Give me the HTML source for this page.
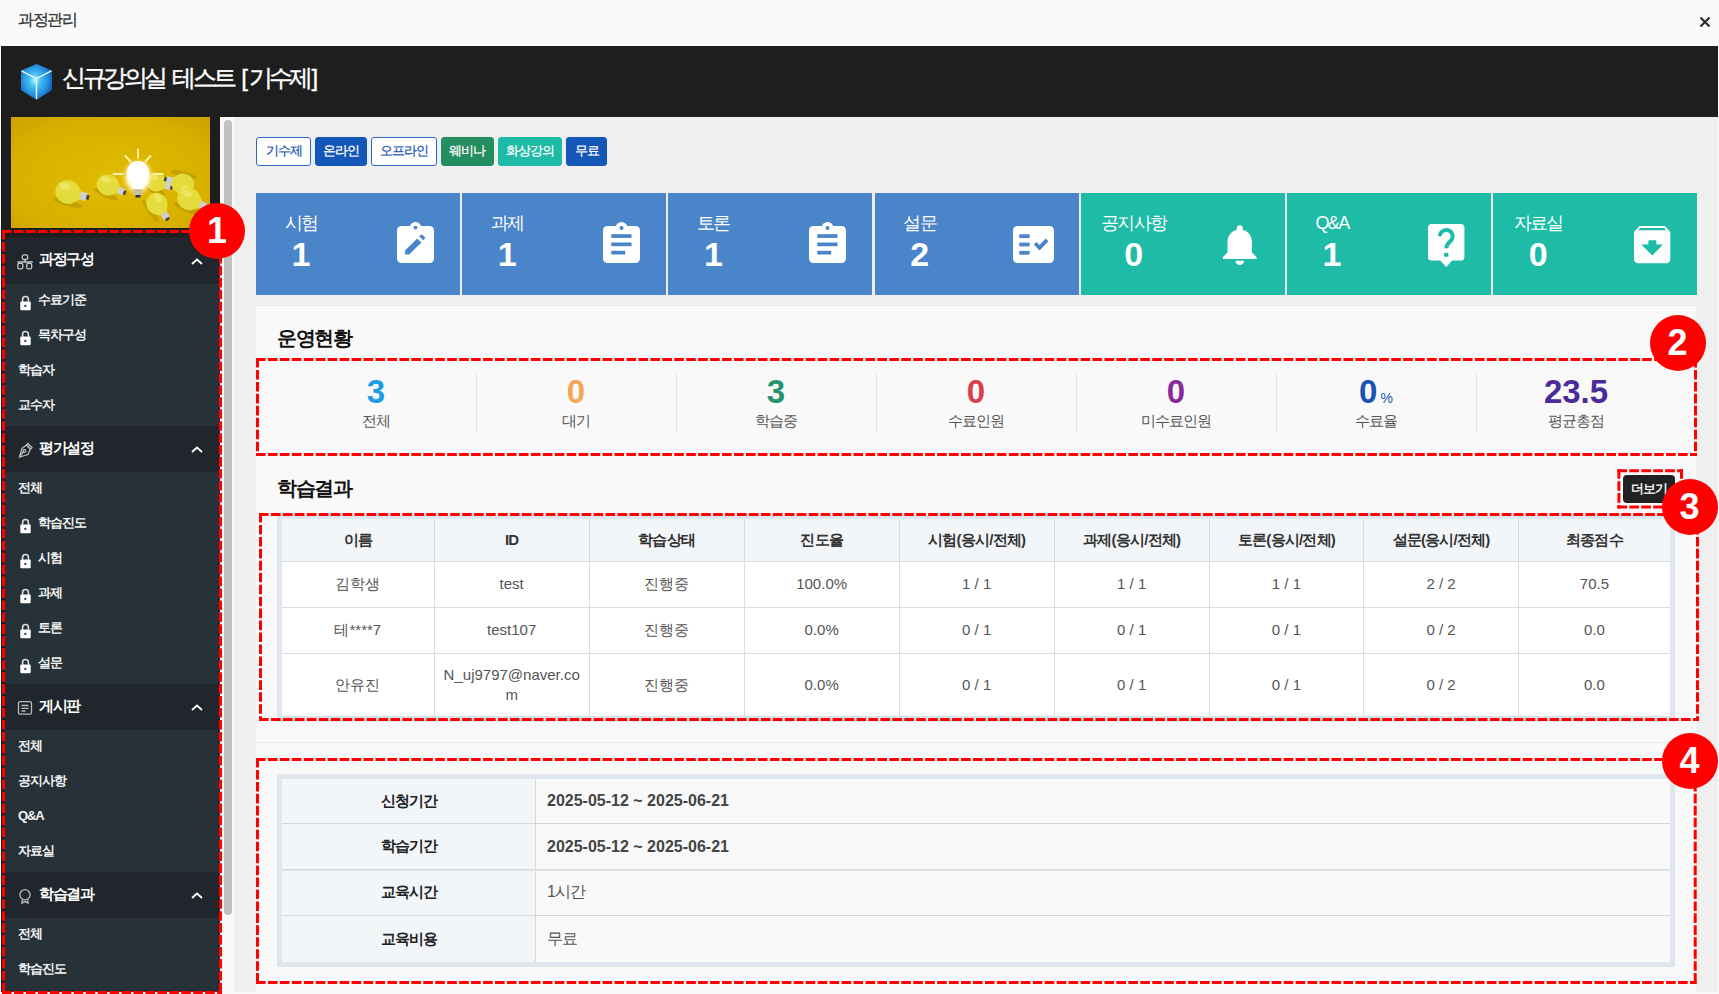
<!DOCTYPE html>
<html><head><meta charset="utf-8">
<style>
*{box-sizing:border-box;margin:0;padding:0}
html,body{width:1719px;height:994px;overflow:hidden;background:#f9f9f9;font-family:"Liberation Sans",sans-serif}
.abs{position:absolute}
#topbar{left:0;top:0;width:1719px;height:46px;background:#f9f9f9}
#ttl{left:18px;top:10px;font-size:16px;color:#333;letter-spacing:-1.5px;line-height:20px;-webkit-text-stroke:0.3px #333}
#close{left:1699px;top:13px;font-size:17px;color:#333;line-height:20px}
#hdr{left:1px;top:46px;width:1717px;height:71px;background:#1e1e1e}
#htitle{left:62px;top:63px;font-size:24px;color:#fff;line-height:30px;letter-spacing:-3.4px;word-spacing:4px;-webkit-text-stroke:0.4px #fff}
#side{left:1px;top:117px;width:219px;height:875px;background:#1e1e1e;overflow:hidden}
#content{left:234px;top:117px;width:1484px;height:875px;background:#efefef}
#sbtrack{left:220px;top:117px;width:14px;height:877px;background:#f9f9f9}
#sbthumb{left:224px;top:120px;width:8px;height:795px;background:#c1c1c1;border-radius:4px}

#img{left:11px;top:117px;width:199px;height:111px}
#menu{left:5px;top:237px;width:214px;height:755px;overflow:hidden}
.mh{position:relative;height:46px;background:#20262b;color:#fff;font-size:15px;font-weight:bold;line-height:44px;padding-left:34px;letter-spacing:-1.3px}
.mh svg.ic{position:absolute;left:12px;top:16px}
.mh svg.chev{position:absolute;left:185px;top:19px}
.ms{background:#263238;padding-bottom:2px}
.mh:first-child{height:47px;line-height:44px}
.mh:first-child svg.ic{top:17px}.mh:first-child svg.chev{top:20px}
.mi{position:relative;height:35px;line-height:32px;color:#f2f2f2;font-size:13px;font-weight:bold;padding-left:13px;letter-spacing:-1.1px}
.mi.lk{padding-left:33px}
.mi svg{position:absolute;left:15px;top:10.5px}

.tag{position:absolute;top:137px;height:29px;border-radius:3px;font-size:13px;line-height:25px;-webkit-text-stroke:0.25px currentColor;text-align:center;letter-spacing:-1px;border:1px solid transparent}
.t-o{background:#fff;border-color:#2a67c6;color:#1c57b5}
.t-b{background:#1556b9;border-color:#1556b9;color:#fff}
.t-g{background:#248e60;border-color:#248e60;color:#fff}
.t-t{background:#1dbba6;border-color:#1dbba6;color:#fff}
.card{position:absolute;top:193px;width:204px;height:102px;color:#fff}
.c-b{background:#4a84c9}
.c-t{background:#1ebba7}
.card .cw{position:absolute;left:20px;top:18.5px;min-width:50px;text-align:center}
.card .cl{font-size:18px;line-height:22px;letter-spacing:-1.6px;white-space:nowrap}
.card .cn{font-size:34px;font-weight:bold;line-height:34px;margin-top:3.5px}
.card svg{position:absolute}

#panel{left:256px;top:305px;width:1440px;height:687px;background:#f9f9f9;border-top:1.5px solid #e6e6e6}
#psep{left:256px;top:742px;width:1440px;height:1px;background:#e6e6e6}
.h3{position:absolute;left:277px;font-size:20px;font-weight:bold;color:#111;letter-spacing:-1.3px;line-height:24px}
.st{position:absolute;top:373.5px;width:200px;height:64px;text-align:center}
.st .n{font-size:33px;font-weight:bold;line-height:36px;height:36px}
.st .n small{font-size:14px;font-weight:normal;margin-left:3px}
.st .l{font-size:15px;color:#555;line-height:18px;margin-top:2.5px;letter-spacing:-1px}
.dv{position:absolute;top:374px;width:1px;height:58px;background:#e2e2e2}
#more{left:1623px;top:474.5px;width:52px;height:28px;background:#222;border-radius:4px;color:#fff;font-size:13px;line-height:28px;text-align:center;letter-spacing:-1px;-webkit-text-stroke:0.35px #fff}
.tb{position:absolute;background:#dfe6ee}
.row{position:absolute;left:282px;width:1388px;border-bottom:1px solid #dcdcdc}
.cell{position:absolute;top:0;height:100%;display:flex;align-items:center;justify-content:center;text-align:center;border-left:1px solid #dcdcdc;font-size:15px;color:#555;line-height:20px}
.hd .cell{font-weight:bold;color:#333;letter-spacing:-0.8px}

.irow{position:absolute;left:282px;width:1388px;background:#f9f9f9}
.ilab{position:absolute;left:0;top:0;width:254px;height:100%;background:#f3f6f9;border-right:1px solid #d8d8d8;display:flex;align-items:center;justify-content:center;font-size:15px;font-weight:bold;color:#222;letter-spacing:-1px}
.ival{position:absolute;left:265px;top:0;height:100%;display:flex;align-items:center;font-size:16px;color:#555}
.ival.b{font-weight:bold;color:#444}
.ival.k{letter-spacing:-1px}
#ann{position:absolute;left:0;top:0;pointer-events:none}
.bd{position:absolute;width:56px;height:56px;border-radius:50%;background:#ff0000;color:#fff;font-size:36px;font-weight:bold;text-align:center;line-height:56px}
</style></head><body>
<div id="topbar" class="abs"></div>
<div id="ttl" class="abs">과정관리</div>
<svg class="abs" style="left:1699px;top:16px" width="12" height="12" viewBox="0 0 12 12"><path d="M1.5 1.5L10.5 10.5M10.5 1.5L1.5 10.5" stroke="#333" stroke-width="2.3"/></svg>
<div id="hdr" class="abs"></div>
<svg class="abs" style="left:20px;top:63px" width="33" height="38" viewBox="0 0 33 38">
<defs><radialGradient id="cg" cx="0.45" cy="0.45" r="0.6"><stop offset="0" stop-color="#b5f4ff"/><stop offset="0.3" stop-color="#45c0f2"/><stop offset="0.75" stop-color="#1f86d8"/><stop offset="1" stop-color="#1158b0"/></radialGradient></defs>
<path d="M16.5 1L32 7.5V27L16.5 37L1 27V7.5Z" fill="url(#cg)"/>
<path d="M1.5 7.8L16.5 15.5L31.5 7.8M16.5 15.5V36" fill="none" stroke="#e8fbff" stroke-width="1.4"/>
</svg>
<div id="htitle" class="abs">신규강의실 테스트 <span style="letter-spacing:0.5px">[</span><span style="letter-spacing:-4px">기수제</span><span style="letter-spacing:0;margin-left:3px">]</span></div>
<div id="side" class="abs"></div>
<svg id="img" class="abs" width="199" height="111" viewBox="0 0 199 111">
<defs><radialGradient id="bg" cx="0.5" cy="0.55" r="0.85"><stop offset="0" stop-color="#e0bb00"/><stop offset="0.6" stop-color="#d8b000"/><stop offset="1" stop-color="#c89a00"/></radialGradient>
<radialGradient id="glow" cx="0.5" cy="0.5" r="0.5"><stop offset="0" stop-color="#fff"/><stop offset="0.6" stop-color="#fffbe0"/><stop offset="1" stop-color="#ffcc33" stop-opacity="0"/></radialGradient></defs>
<rect width="199" height="111" fill="url(#bg)"/>
<g transform="translate(57.0 75.0) rotate(15) scale(1.15)"><ellipse cx="2" cy="9" rx="13" ry="3" fill="#a88a00" opacity="0.45"/><path d="M-11 0a11 10 0 0 1 17-8.5L12-3v6L6 8.5A11 10 0 0 1-11 0Z" fill="#e4dc3c"/><ellipse cx="-4" cy="-4" rx="5" ry="3" fill="#f0ea70" opacity="0.7"/><rect x="11" y="-3.5" width="6" height="7" rx="1" fill="#d0d0c8"/><rect x="16.5" y="-2" width="2.5" height="4" fill="#444"/></g><g transform="translate(97.0 68.0) rotate(25) scale(1.03)"><ellipse cx="2" cy="9" rx="13" ry="3" fill="#a88a00" opacity="0.45"/><path d="M-11 0a11 10 0 0 1 17-8.5L12-3v6L6 8.5A11 10 0 0 1-11 0Z" fill="#e4dc3c"/><ellipse cx="-4" cy="-4" rx="5" ry="3" fill="#f0ea70" opacity="0.7"/><rect x="11" y="-3.5" width="6" height="7" rx="1" fill="#d0d0c8"/><rect x="16.5" y="-2" width="2.5" height="4" fill="#444"/></g><g transform="translate(145.0 65.0) rotate(20) scale(0.92)"><ellipse cx="2" cy="9" rx="13" ry="3" fill="#a88a00" opacity="0.45"/><path d="M-11 0a11 10 0 0 1 17-8.5L12-3v6L6 8.5A11 10 0 0 1-11 0Z" fill="#e4dc3c"/><ellipse cx="-4" cy="-4" rx="5" ry="3" fill="#f0ea70" opacity="0.7"/><rect x="11" y="-3.5" width="6" height="7" rx="1" fill="#d0d0c8"/><rect x="16.5" y="-2" width="2.5" height="4" fill="#444"/></g><g transform="translate(172.0 67.0) rotate(-165) scale(1.03)"><ellipse cx="2" cy="9" rx="13" ry="3" fill="#a88a00" opacity="0.45"/><path d="M-11 0a11 10 0 0 1 17-8.5L12-3v6L6 8.5A11 10 0 0 1-11 0Z" fill="#e4dc3c"/><ellipse cx="-4" cy="-4" rx="5" ry="3" fill="#f0ea70" opacity="0.7"/><rect x="11" y="-3.5" width="6" height="7" rx="1" fill="#d0d0c8"/><rect x="16.5" y="-2" width="2.5" height="4" fill="#444"/></g><g transform="translate(178.0 82.0) rotate(25) scale(1.09)"><ellipse cx="2" cy="9" rx="13" ry="3" fill="#a88a00" opacity="0.45"/><path d="M-11 0a11 10 0 0 1 17-8.5L12-3v6L6 8.5A11 10 0 0 1-11 0Z" fill="#e4dc3c"/><ellipse cx="-4" cy="-4" rx="5" ry="3" fill="#f0ea70" opacity="0.7"/><rect x="11" y="-3.5" width="6" height="7" rx="1" fill="#d0d0c8"/><rect x="16.5" y="-2" width="2.5" height="4" fill="#444"/></g><g transform="translate(146.0 87.0) rotate(55) scale(1.03)"><ellipse cx="2" cy="9" rx="13" ry="3" fill="#a88a00" opacity="0.45"/><path d="M-11 0a11 10 0 0 1 17-8.5L12-3v6L6 8.5A11 10 0 0 1-11 0Z" fill="#e4dc3c"/><ellipse cx="-4" cy="-4" rx="5" ry="3" fill="#f0ea70" opacity="0.7"/><rect x="11" y="-3.5" width="6" height="7" rx="1" fill="#d0d0c8"/><rect x="16.5" y="-2" width="2.5" height="4" fill="#444"/></g>
<ellipse cx="127" cy="60" rx="17" ry="20" fill="url(#glow)"/>
<path d="M127 44a11 11.5 0 0 1 7 20.5c-1 1-2 3-2 5.5v2h-10v-2c0-2.5-1-4.5-2-5.5A11 11.5 0 0 1 127 44Z" fill="#fff"/>
<rect x="122.5" y="72" width="9" height="6" rx="1" fill="#c8c0a0"/>
<rect x="124.5" y="78" width="5" height="2.5" fill="#333"/>
<g stroke="#fff3b0" stroke-width="2" stroke-linecap="round"><path d="M127 32.5v8M114.5 39l5 5.5M139.5 39l-5 5.5M102.5 57h9M142.5 57h9"/></g>
</svg>
<div id="menu" class="abs"><div class="mh"><svg class="ic" width="17" height="16" viewBox="0 0 17 16" fill="none" stroke="#c8c8c8" stroke-width="1.3"><rect x="5.3" y="0.9" width="5.4" height="4.6" rx="1.6"/><path d="M8 5.5V8M0.3 8H15.8"/><rect x="0.8" y="9.3" width="5" height="5.6" rx="1.6"/><rect x="9.7" y="9.3" width="5" height="5.6" rx="1.6"/></svg>과정구성<svg class="chev" width="14" height="9" viewBox="0 0 14 9"><path d="M2 7L7 2.5L12 7" fill="none" stroke="#fff" stroke-width="1.8"/></svg></div><div class="ms"><div class="mi lk"><svg width="11" height="16" viewBox="0 0 11 16"><path d="M2.6 7.2V4.4a2.9 2.9 0 0 1 5.8 0V7.2" fill="none" stroke="#ddd" stroke-width="1.6"/><rect x="0.3" y="6.6" width="10.4" height="8.6" rx="1" fill="#fff"/><circle cx="5.3" cy="10.9" r="1.1" fill="#333"/></svg>수료기준</div><div class="mi lk"><svg width="11" height="16" viewBox="0 0 11 16"><path d="M2.6 7.2V4.4a2.9 2.9 0 0 1 5.8 0V7.2" fill="none" stroke="#ddd" stroke-width="1.6"/><rect x="0.3" y="6.6" width="10.4" height="8.6" rx="1" fill="#fff"/><circle cx="5.3" cy="10.9" r="1.1" fill="#333"/></svg>목차구성</div><div class="mi">학습자</div><div class="mi">교수자</div></div><div class="mh"><svg class="ic" width="17" height="16" viewBox="0 0 17 16" fill="none" stroke="#bbb" stroke-width="1.3"><path d="M11 1.5l4 4-1.5 1.5-4-4z"/><path d="M9.5 3l4 4-2.5 5.5-8.5 2.5 2.5-8.5z"/><circle cx="7.5" cy="9" r="1.3"/><path d="M2.5 14.5l4-4.5"/></svg>평가설정<svg class="chev" width="14" height="9" viewBox="0 0 14 9"><path d="M2 7L7 2.5L12 7" fill="none" stroke="#fff" stroke-width="1.8"/></svg></div><div class="ms"><div class="mi">전체</div><div class="mi lk"><svg width="11" height="16" viewBox="0 0 11 16"><path d="M2.6 7.2V4.4a2.9 2.9 0 0 1 5.8 0V7.2" fill="none" stroke="#ddd" stroke-width="1.6"/><rect x="0.3" y="6.6" width="10.4" height="8.6" rx="1" fill="#fff"/><circle cx="5.3" cy="10.9" r="1.1" fill="#333"/></svg>학습진도</div><div class="mi lk"><svg width="11" height="16" viewBox="0 0 11 16"><path d="M2.6 7.2V4.4a2.9 2.9 0 0 1 5.8 0V7.2" fill="none" stroke="#ddd" stroke-width="1.6"/><rect x="0.3" y="6.6" width="10.4" height="8.6" rx="1" fill="#fff"/><circle cx="5.3" cy="10.9" r="1.1" fill="#333"/></svg>시험</div><div class="mi lk"><svg width="11" height="16" viewBox="0 0 11 16"><path d="M2.6 7.2V4.4a2.9 2.9 0 0 1 5.8 0V7.2" fill="none" stroke="#ddd" stroke-width="1.6"/><rect x="0.3" y="6.6" width="10.4" height="8.6" rx="1" fill="#fff"/><circle cx="5.3" cy="10.9" r="1.1" fill="#333"/></svg>과제</div><div class="mi lk"><svg width="11" height="16" viewBox="0 0 11 16"><path d="M2.6 7.2V4.4a2.9 2.9 0 0 1 5.8 0V7.2" fill="none" stroke="#ddd" stroke-width="1.6"/><rect x="0.3" y="6.6" width="10.4" height="8.6" rx="1" fill="#fff"/><circle cx="5.3" cy="10.9" r="1.1" fill="#333"/></svg>토론</div><div class="mi lk"><svg width="11" height="16" viewBox="0 0 11 16"><path d="M2.6 7.2V4.4a2.9 2.9 0 0 1 5.8 0V7.2" fill="none" stroke="#ddd" stroke-width="1.6"/><rect x="0.3" y="6.6" width="10.4" height="8.6" rx="1" fill="#fff"/><circle cx="5.3" cy="10.9" r="1.1" fill="#333"/></svg>설문</div></div><div class="mh"><svg class="ic" width="16" height="16" viewBox="0 0 16 16" fill="none" stroke="#bbb" stroke-width="1.3"><rect x="1.5" y="1.7" width="13" height="12.5" rx="1.5"/><path d="M4.5 5.5h7M4.5 8.3h7M4.5 11h4"/></svg>게시판<svg class="chev" width="14" height="9" viewBox="0 0 14 9"><path d="M2 7L7 2.5L12 7" fill="none" stroke="#fff" stroke-width="1.8"/></svg></div><div class="ms"><div class="mi">전체</div><div class="mi">공지사항</div><div class="mi">Q&amp;A</div><div class="mi">자료실</div></div><div class="mh"><svg class="ic" width="16" height="17" viewBox="0 0 16 17" fill="none" stroke="#bbb" stroke-width="1.3"><circle cx="8" cy="6.8" r="5.1"/><path d="M5.4 11.6L4.9 15.2L8 13.6L11.1 15.2L10.6 11.6"/></svg>학습결과<svg class="chev" width="14" height="9" viewBox="0 0 14 9"><path d="M2 7L7 2.5L12 7" fill="none" stroke="#fff" stroke-width="1.8"/></svg></div><div class="ms"><div class="mi">전체</div><div class="mi">학습진도</div><div class="mi">학습현황</div></div></div>
<div id="sbtrack" class="abs"></div>
<div id="sbthumb" class="abs"></div>
<div id="content" class="abs"></div>
<div class="tag t-o" style="left:256.0px;width:55.0px">기수제</div><div class="tag t-b" style="left:314.6px;width:52.0px">온라인</div><div class="tag t-o" style="left:371.0px;width:66.0px">오프라인</div><div class="tag t-g" style="left:441.2px;width:52.5px">웨비나</div><div class="tag t-t" style="left:498.2px;width:63.7px">화상강의</div><div class="tag t-b" style="left:566.4px;width:40.5px">무료</div>
<div class="card c-b" style="left:256.0px"><div class="cw"><div class="cl">시험</div><div class="cn">1</div></div><svg style="left:140.6px;top:29px" width="37" height="41" view#4a84c9ox="0 0 37 41"><rect x="0" y="4" width="37" height="37" rx="4.5" fill="#fff"/><circle cx="18.5" cy="6" r="6" fill="#fff"/><circle cx="18.5" cy="5.6" r="1.9" fill="#4a84c9"/><path d="M8.1 28.5L20.2 16.6L24.4 20.5L12.2 32.6H8.1Z M22.2 14.4L24.7 12.2L28.5 15.8L26.3 18.3Z" fill="#4a84c9"/></svg></div>
<div class="card c-b" style="left:462.2px"><div class="cw"><div class="cl">과제</div><div class="cn">1</div></div><svg style="left:140.6px;top:29px" width="37" height="41" view#4a84c9ox="0 0 37 41"><rect x="0" y="4" width="37" height="37" rx="4.5" fill="#fff"/><circle cx="18.5" cy="6" r="6" fill="#fff"/><circle cx="18.5" cy="6.1" r="2" fill="#4a84c9"/><rect x="8.3" y="12.2" width="20.2" height="3.7" fill="#4a84c9"/><rect x="8.3" y="20.5" width="20.2" height="3.7" fill="#4a84c9"/><rect x="8.3" y="28.8" width="13.9" height="3.7" fill="#4a84c9"/></svg></div>
<div class="card c-b" style="left:668.4px"><div class="cw"><div class="cl">토론</div><div class="cn">1</div></div><svg style="left:140.6px;top:29px" width="37" height="41" view#4a84c9ox="0 0 37 41"><rect x="0" y="4" width="37" height="37" rx="4.5" fill="#fff"/><circle cx="18.5" cy="6" r="6" fill="#fff"/><circle cx="18.5" cy="6.1" r="2" fill="#4a84c9"/><rect x="8.3" y="12.2" width="20.2" height="3.7" fill="#4a84c9"/><rect x="8.3" y="20.5" width="20.2" height="3.7" fill="#4a84c9"/><rect x="8.3" y="28.8" width="13.9" height="3.7" fill="#4a84c9"/></svg></div>
<div class="card c-b" style="left:874.6px"><div class="cw"><div class="cl">설문</div><div class="cn">2</div></div><svg style="left:138.8px;top:32.8px" width="41" height="37" view#4a84c9ox="0 0 41 37"><rect x="0" y="0" width="41" height="37" rx="4.5" fill="#fff"/><rect x="6.3" y="8.3" width="10.3" height="3.8" fill="#4a84c9"/><rect x="6.3" y="16.6" width="10.3" height="3.8" fill="#4a84c9"/><rect x="6.3" y="24.9" width="10.3" height="3.8" fill="#4a84c9"/><path d="M20.8 18.6L23.6 16.1L26.6 19.1L32.7 12.6L35.4 15.3L26.6 24.4Z" fill="#4a84c9"/></svg></div>
<div class="card c-t" style="left:1080.8px"><div class="cw"><div class="cl">공지사항</div><div class="cn">0</div></div><svg style="left:142.2px;top:31.8px" width="34" height="41" viewBox="0 0 34 41"><path d="M16.75 0.2a3 3 0 0 1 3 3v1.6C25.5 6.3 29 11 29 17.5V27.6L33.5 32V34H0V32L4.5 27.6V17.5C4.5 11 8 6.3 13.75 4.8V3.2a3 3 0 0 1 3-3Z" fill="#fff"/><path d="M12.5 35.8a4.25 4.25 0 0 0 8.5 0Z" fill="#fff"/></svg></div>
<div class="card c-t" style="left:1287.0px"><div class="cw"><div class="cl">Q&amp;A</div><div class="cn">1</div></div><svg style="left:141.2px;top:31px" width="37" height="43" viewBox="0 0 37 43"><rect x="0" y="0" width="36.4" height="36.6" rx="3.5" fill="#fff"/><path d="M11.8 36H24.6L18.2 43Z" fill="#fff"/><path d="M11.8 12.3A6.4 6.4 0 1 1 23.6 15.8C21.2 18.8 18.3 20.5 18.3 24.3" fill="none" stroke="#1ebba7" stroke-width="3.9"/><rect x="16.1" y="28.8" width="4.3" height="3.9" fill="#1ebba7"/></svg></div>
<div class="card c-t" style="left:1493.2px"><div class="cw"><div class="cl">자료실</div><div class="cn">0</div></div><svg style="left:140.6px;top:32.8px" width="37" height="38" viewBox="0 0 37 38"><path d="M5.5 0H30.8L36.3 6V33A4 4 0 0 1 32.3 37.2H4A4 4 0 0 1 0 33V6Z" fill="#fff"/><path d="M6 2.1H30.3L32 4.2H4.4Z" fill="#1ebba7"/><path d="M14.4 14.2H22.4V18.6H29L18.3 29.6L7.3 18.6H14.4Z" fill="#1ebba7"/></svg></div>

<div id="panel" class="abs"></div><div id="psep" class="abs"></div>
<div class="h3" style="top:326px">운영현황</div>
<div class="st" style="left:276px"><div class="n" style="color:#1c9be6">3</div><div class="l">전체</div></div><div class="st" style="left:476px"><div class="n" style="color:#f4a55a">0</div><div class="l">대기</div></div><div class="st" style="left:676px"><div class="n" style="color:#27956a">3</div><div class="l">학습중</div></div><div class="st" style="left:876px"><div class="n" style="color:#d8404b">0</div><div class="l">수료인원</div></div><div class="st" style="left:1076px"><div class="n" style="color:#8a2a9a">0</div><div class="l">미수료인원</div></div><div class="st" style="left:1276px"><div class="n" style="color:#1a55b5">0<small>%</small></div><div class="l">수료율</div></div><div class="st" style="left:1476px"><div class="n" style="color:#4b2a9a">23.5</div><div class="l">평균총점</div></div><div class="dv" style="left:476px"></div><div class="dv" style="left:676px"></div><div class="dv" style="left:876px"></div><div class="dv" style="left:1076px"></div><div class="dv" style="left:1276px"></div><div class="dv" style="left:1476px"></div>
<div class="h3" style="top:476px">학습결과</div><div id="more" class="abs">더보기</div>
<div class="tb" style="left:277px;top:514px;width:1398px;height:208px"></div><div class="abs" style="left:282px;top:519px;width:1388px;height:198px;background:#fff"></div><div class="row hd" style="top:519.0px;height:42.5px;background:#f3f6f9"><div class="cell" style="left:0.0px;width:151.7px;border-left:none;">이름</div><div class="cell" style="left:151.7px;width:155.0px;">ID</div><div class="cell" style="left:306.7px;width:155.0px;">학습상태</div><div class="cell" style="left:461.7px;width:154.9px;">진도율</div><div class="cell" style="left:616.6px;width:155.1px;">시험(응시/전체)</div><div class="cell" style="left:771.7px;width:155.0px;">과제(응시/전체)</div><div class="cell" style="left:926.7px;width:154.5px;">토론(응시/전체)</div><div class="cell" style="left:1081.2px;width:154.7px;">설문(응시/전체)</div><div class="cell" style="left:1235.9px;width:152.1px;">최종점수</div></div>
<div class="row" style="top:561.5px;height:46.0px;background:#fff"><div class="cell" style="left:0.0px;width:151.7px;border-left:none;">김학생</div><div class="cell" style="left:151.7px;width:155.0px;">test</div><div class="cell" style="left:306.7px;width:155.0px;">진행중</div><div class="cell" style="left:461.7px;width:154.9px;">100.0%</div><div class="cell" style="left:616.6px;width:155.1px;">1 / 1</div><div class="cell" style="left:771.7px;width:155.0px;">1 / 1</div><div class="cell" style="left:926.7px;width:154.5px;">1 / 1</div><div class="cell" style="left:1081.2px;width:154.7px;">2 / 2</div><div class="cell" style="left:1235.9px;width:152.1px;">70.5</div></div>
<div class="row" style="top:607.5px;height:46.0px;background:#fff"><div class="cell" style="left:0.0px;width:151.7px;border-left:none;">테****7</div><div class="cell" style="left:151.7px;width:155.0px;">test107</div><div class="cell" style="left:306.7px;width:155.0px;">진행중</div><div class="cell" style="left:461.7px;width:154.9px;">0.0%</div><div class="cell" style="left:616.6px;width:155.1px;">0 / 1</div><div class="cell" style="left:771.7px;width:155.0px;">0 / 1</div><div class="cell" style="left:926.7px;width:154.5px;">0 / 1</div><div class="cell" style="left:1081.2px;width:154.7px;">0 / 2</div><div class="cell" style="left:1235.9px;width:152.1px;">0.0</div></div>
<div class="row" style="top:653.5px;height:63.5px;background:#fff"><div class="cell" style="left:0.0px;width:151.7px;border-left:none;">안유진</div><div class="cell" style="left:151.7px;width:155.0px;">N_uj9797@naver.co<br>m</div><div class="cell" style="left:306.7px;width:155.0px;">진행중</div><div class="cell" style="left:461.7px;width:154.9px;">0.0%</div><div class="cell" style="left:616.6px;width:155.1px;">0 / 1</div><div class="cell" style="left:771.7px;width:155.0px;">0 / 1</div><div class="cell" style="left:926.7px;width:154.5px;">0 / 1</div><div class="cell" style="left:1081.2px;width:154.7px;">0 / 2</div><div class="cell" style="left:1235.9px;width:152.1px;">0.0</div></div>
<div class="tb" style="left:277px;top:774px;width:1398px;height:193px"></div>
<div class="irow" style="top:779.0px;height:45.2px;border-bottom:1px solid #d8d8d8;"><div class="ilab">신청기간</div><div class="ival b">2025-05-12 ~ 2025-06-21</div></div>
<div class="irow" style="top:824.2px;height:46.3px;border-bottom:1px solid #d8d8d8;"><div class="ilab">학습기간</div><div class="ival b">2025-05-12 ~ 2025-06-21</div></div>
<div class="irow" style="top:870.5px;height:45.5px;border-bottom:1px solid #d8d8d8;"><div class="ilab">교육시간</div><div class="ival k">1시간</div></div>
<div class="irow" style="top:916.0px;height:46.0px;"><div class="ilab">교육비용</div><div class="ival k">무료</div></div>
<svg id="ann" width="1719" height="994"><g stroke="#ff0000" stroke-width="3" fill="none" stroke-dasharray="9.6 2.35"><path d="M2.0 231.5H222.0"/><path d="M220.5 230.0V994.0"/><path d="M2.0 992.5H222.0"/><path d="M3.5 230.0V994.0"/><path d="M256.0 359.5H1697.0"/><path d="M1695.5 358.0V456"/><path d="M256.0 454.5H1697.0"/><path d="M257.5 358.0V456"/><path d="M259.0 514.5H1699.0"/><path d="M1697.5 513.0V721.0"/><path d="M259.0 719.5H1699.0"/><path d="M260.5 513.0V721.0"/><path d="M1617.4 470.7H1683.0"/><path d="M1681.5 469.2V508.5"/><path d="M1617.4 507.0H1683.0"/><path d="M1618.9 469.2V508.5"/><path d="M256.0 759.5H1696.7"/><path d="M1695.2 758.0V984.0"/><path d="M256.0 982.5H1696.7"/><path d="M257.5 758.0V984.0"/></g></svg>
<div class="bd" style="left:189.0px;top:202.5px">1</div><div class="bd" style="left:1649.6px;top:314.6px">2</div><div class="bd" style="left:1661.6px;top:478.8px">3</div><div class="bd" style="left:1661.5px;top:732.5px">4</div>
</body></html>
